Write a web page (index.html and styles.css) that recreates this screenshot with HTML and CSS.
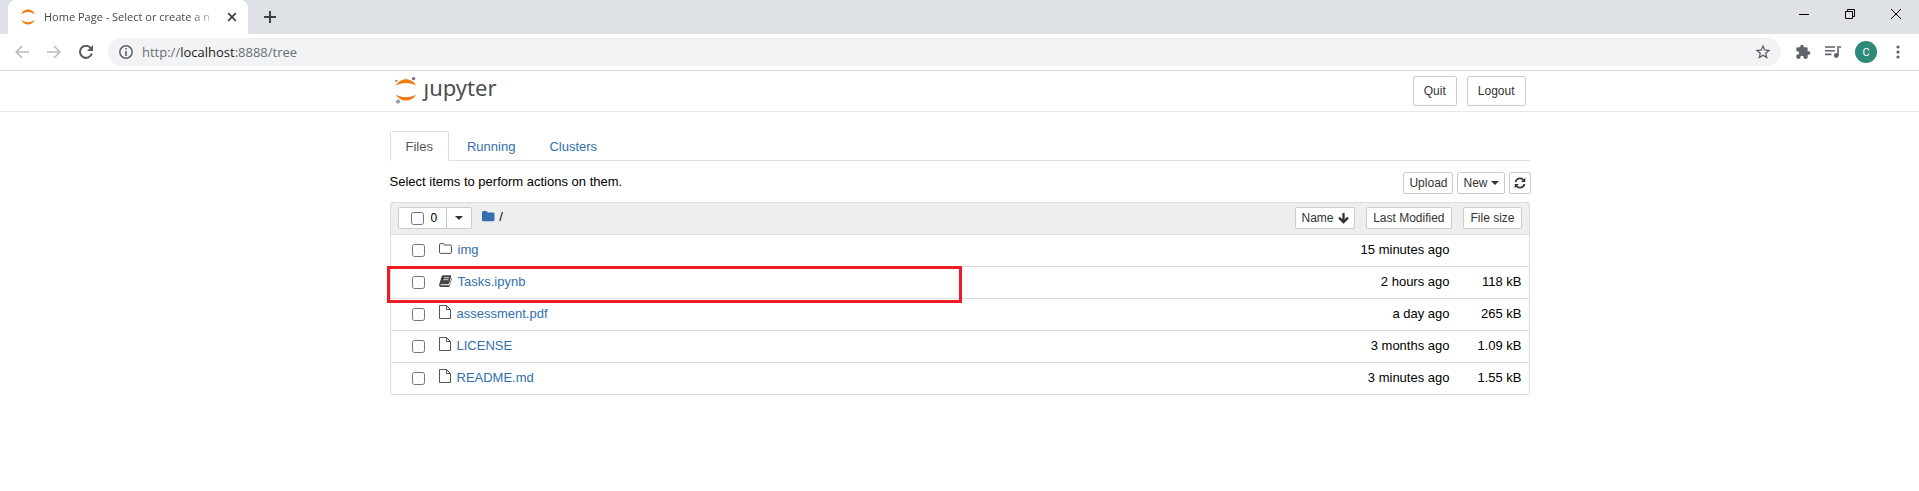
FILE: index.html
```html
<!DOCTYPE html>
<html lang="en">
<head>
<meta charset="utf-8">
<meta name="viewport" content="width=device-width, initial-scale=1">
<title>Home Page - Select or create a notebook</title>
<link rel="stylesheet" href="styles.css">
</head>
<body>
<svg class="sprite" aria-hidden="true">
  <symbol id="file" viewBox="0 0 12 14"><path d="M.5.5h7l4 4v9H.5zM7.500.500v4h4" fill="none" stroke="currentColor"/></symbol>
  <symbol id="moons" viewBox="0 0 16 16"><path d="M1 5.500C4-1.200 12-1.200 15 5.500 11 2 5 2 1 5.500zM1 10.500C4 17.200 12 17.200 15 10.500 11 14 5 14 1 10.500z" fill="#ee7c12"/></symbol>
</svg>

<div class="browser">
  <div class="tabstrip">
    <div class="tab">
      <svg class="favicon" viewBox="0 0 16 16"><use href="#moons"/></svg>
      <span class="tab-title">Home Page - Select or create a n</span>
      <button class="plain" aria-label="Close tab"><svg width="10" height="10" viewBox="0 0 10 10"><path d="M1.200 1.200l7.600 7.600M8.800 1.200L1.200 8.800" stroke="#3c4043" stroke-width="1.700"/></svg></button>
    </div>
    <button class="plain new-tab" aria-label="New tab"><svg width="12" height="12" viewBox="0 0 12 12"><path d="M6 0v12M0 6h12" stroke="#3c4043" stroke-width="2"/></svg></button>
    <div class="window-controls">
      <button class="plain" aria-label="Minimize"><svg width="10" height="10" viewBox="0 0 10 10"><path d="M0 5.500h10" stroke="#000"/></svg></button>
      <button class="plain" aria-label="Restore"><svg width="10" height="10" viewBox="0 0 10 10"><path d="M.5 2.500h7v7h-7zM2.500 2.500v-2h7v7h-2" fill="none" stroke="#000"/></svg></button>
      <button class="plain" aria-label="Close"><svg width="10" height="10" viewBox="0 0 10 10"><path d="M0 0l10 10M10 0L0 10" stroke="#000"/></svg></button>
    </div>
  </div>
  <div class="toolbar">
    <div class="nav">
      <button class="plain" aria-label="Back"><svg width="14" height="14" viewBox="0 0 14 14"><path d="M14 7H1.500M7 1L1.200 7 7 13" fill="none" stroke="#babcbe" stroke-width="1.700"/></svg></button>
      <button class="plain" aria-label="Forward"><svg width="14" height="14" viewBox="0 0 14 14"><path d="M0 7h12.500M7 1l5.800 6L7 13" fill="none" stroke="#babcbe" stroke-width="1.700"/></svg></button>
      <button class="plain" aria-label="Reload"><svg width="14" height="14" viewBox="0 0 14 14"><path d="M11.800 3.200A6 6 0 1 0 12.800 8.500" fill="none" stroke="#55585c" stroke-width="2"/><path d="M14 0v6H8z" fill="#55585c"/></svg></button>
    </div>
    <div class="omnibox">
      <svg width="14" height="14" viewBox="0 0 14 14"><circle cx="7" cy="7" r="6.200" fill="none" stroke="#5f6368" stroke-width="1.500"/><path d="M7 3v1.600M7 6v5" stroke="#5f6368" stroke-width="1.600"/></svg>
      <span class="url">http://<b>localhost</b>:8888/tree</span>
      <button class="plain" aria-label="Bookmark"><svg width="18" height="18" viewBox="0 0 24 24"><path d="M22 9.240l-7.190-.62L12 2 9.190 8.630 2 9.240l5.460 4.730L5.820 21 12 17.270 18.180 21l-1.630-7.030zM12 15.400l-3.760 2.270 1-4.280-3.320-2.880 4.380-.38L12 6.100l1.710 4.040 4.380.38-3.320 2.880 1 4.280z" fill="#55585c"/></svg></button>
    </div>
    <div class="actions">
      <button class="plain" aria-label="Extensions"><svg width="16" height="16" viewBox="0 0 24 24"><path d="M20.500 11H19V7a2 2 0 0 0-2-2h-4V3.500a2.500 2.500 0 0 0-5 0V5H4a2 2 0 0 0-2 2v3.800h1.500a2.700 2.700 0 0 1 0 5.400H2V20a2 2 0 0 0 2 2h3.800v-1.500a2.700 2.700 0 0 1 5.400 0V22H17a2 2 0 0 0 2-2v-4h1.500a2.500 2.500 0 0 0 0-5z" fill="#5f6368"/></svg></button>
      <button class="plain" aria-label="Media controls"><svg width="16" height="12" viewBox="0 0 16 12"><path d="M0 1h10M0 4.700h10M0 8.400h6.500M13 10V1h3" fill="none" stroke="#5f6368" stroke-width="1.600"/><circle cx="11.300" cy="9.500" r="2.400" fill="#5f6368"/></svg></button>
      <button class="plain avatar" aria-label="Profile C">C</button>
      <button class="plain" aria-label="Menu"><svg width="4" height="14" viewBox="0 0 4 14"><g fill="#5f6368"><circle cx="2" cy="2" r="1.600"/><circle cx="2" cy="7" r="1.600"/><circle cx="2" cy="12" r="1.600"/></g></svg></button>
    </div>
  </div>
</div>

<header class="header">
  <div class="container header-row">
    <a class="logo" href="#" aria-label="jupyter">
      <svg width="24" height="28" viewBox="0 0 24 28"><path d="M2 9.500C6 1.200 18 1.200 22 9.500 16 6 8 6 2 9.500zM2 18.500C6 26.500 18 26.500 22 18.500 16 22 8 22 2 18.500z" fill="#ee7c12"/><circle cx="2.400" cy="4.800" r="1.100" fill="#767677"/><circle cx="19.600" cy="2.600" r="1.700" fill="#767677"/><circle cx="4" cy="25.600" r="2.100" fill="#9e9e9e"/></svg>
      <span class="wordmark">ȷupyter</span>
    </a>
    <div class="session">
      <button class="btn">Quit</button>
      <button class="btn">Logout</button>
    </div>
  </div>
</header>

<main class="container">
  <nav class="tabs">
    <a class="active" href="#files">Files</a>
    <a href="#running">Running</a>
    <a href="#clusters">Clusters</a>
  </nav>
  <div class="tree-bar">
    <p>Select items to perform actions on them.</p>
    <div class="tree-buttons">
      <button class="btn small">Upload</button>
      <button class="btn small">New <i class="caret"></i></button>
      <button class="btn small refresh" aria-label="Refresh"><svg width="12" height="12" viewBox="0 0 12 12"><path d="M1.500 5A4.600 4.600 0 0 1 9.500 3M10.500 7A4.600 4.600 0 0 1 2.500 9" fill="none" stroke="#333" stroke-width="1.700"/><path d="M11.300.8v4.200H7.100zM.7 11.200V7h4.200z" fill="#333"/></svg></button>
    </div>
  </div>
  <div class="listing">
    <table>
      <thead>
        <tr>
          <th class="name">
            <div class="list-head">
              <div class="select-all">
                <label><input type="checkbox"> <span>0</span></label>
                <button aria-label="Select by type"><i class="caret"></i></button>
              </div>
              <a class="crumb" href="#" aria-label="Root folder"><svg width="13" height="11" viewBox="0 0 13 11"><path d="M0 1.500Q0 0 1.500 0h2.600q1.300 0 1.300 1.600h5.800q1.300 0 1.300 1.300v6q0 1.400-1.300 1.400H1.400Q0 10.300 0 8.900z" fill="currentColor"/></svg></a>
              <span class="slash">/</span>
              <button class="btn small sort">Name <svg width="11" height="11" viewBox="0 0 11 11"><path d="M5.500 0v9M1 4.600l4.500 4.500L10 4.600" fill="none" stroke="#333" stroke-width="2.300"/></svg></button>
            </div>
          </th>
          <th class="modified"><button class="btn small wide">Last Modified</button></th>
          <th class="size"><button class="btn small wide">File size</button></th>
        </tr>
      </thead>
      <tbody>
        <tr>
          <td><div class="item"><input type="checkbox" aria-label="Select img"><svg width="13" height="12" viewBox="0 0 13 12"><path d="M.5 2Q.5.600 1.800.600h2.400Q5.300.600 5.300 2h6q1.200 0 1.200 1.200v6q0 1.200-1.200 1.200H1.800Q.5 10.400.5 9.200z" fill="none" stroke="#555"/></svg><a href="#img">img</a></div></td>
          <td class="modified">15 minutes ago</td><td class="size"></td>
        </tr>
        <tr class="marked">
          <td><div class="item"><input type="checkbox" aria-label="Select Tasks.ipynb"><svg width="13" height="12" viewBox="0 0 13 12"><path d="M4 .2h7.600q.9 0 .6.900L10.200 8.300q-.3.900-1.200.900H2.200q-1 0-.7.600.2.500.9.500h7.400q.6 0 .8-.6L12.300 3q.7.300.5 1l-2 6.800q-.3 1.100-1.400 1.100H2q-1.300 0-1.800-1.200Q0 10 .2 9.200L2.700 1.200Q3 .2 4 .2z" fill="#444"/><path d="M5 2.700h5M4.400 4.700h5" stroke="#fff" stroke-width=".8"/></svg><a href="#tasks">Tasks.ipynb</a></div></td>
          <td class="modified">2 hours ago</td><td class="size">118 kB</td>
        </tr>
        <tr>
          <td><div class="item"><input type="checkbox" aria-label="Select assessment.pdf"><svg class="page" width="12" height="14"><use href="#file"/></svg><a href="#assessment">assessment.pdf</a></div></td>
          <td class="modified">a day ago</td><td class="size">265 kB</td>
        </tr>
        <tr>
          <td><div class="item"><input type="checkbox" aria-label="Select LICENSE"><svg class="page" width="12" height="14"><use href="#file"/></svg><a href="#license">LICENSE</a></div></td>
          <td class="modified">3 months ago</td><td class="size">1.09 kB</td>
        </tr>
        <tr>
          <td><div class="item"><input type="checkbox" aria-label="Select README.md"><svg class="page" width="12" height="14"><use href="#file"/></svg><a href="#readme">README.md</a></div></td>
          <td class="modified">3 minutes ago</td><td class="size">1.55 kB</td>
        </tr>
      </tbody>
    </table>
  </div>
</main>
</body>
</html>
```
FILE: styles.css
```css
*, *::after { box-sizing: border-box; }
body {
  margin: 0;
  background: #fff;
  color: #000;
  font: 13px/20px "Liberation Sans", Arial, sans-serif;
}
a { color: #336fae; text-decoration: none; }
button { font: inherit; color: inherit; }
svg { flex: none; display: block; }
.sprite { position: absolute; width: 0; height: 0; }
.plain {
  border: 0; padding: 0; background: none;
  display: flex; align-items: center; justify-content: center;
}

/* Browser window */
.browser { border-bottom: 1px solid #d5d7da; font-family: "Open Sans", sans-serif; }
.tabstrip {
  display: flex; align-items: center;
  height: 34px; padding-left: 8px;
  background: #dee1e6;
}
.tab {
  display: flex; align-items: center;
  width: 240px; height: 34px; padding: 0 11px 0 12px;
  border-radius: 8px 8px 0 0; background: #fff;
}
.favicon { width: 16px; height: 16px; margin-right: 8px; }
.tab-title {
  flex: 1; overflow: hidden; white-space: nowrap;
  font-size: 11px; color: #45494d;
  -webkit-mask-image: linear-gradient(90deg, #000 80%, transparent 96%);
  mask-image: linear-gradient(90deg, #000 80%, transparent 96%);
}
.new-tab { margin-left: 16px; }
.window-controls { display: flex; margin-left: auto; padding-bottom: 6px; }
.window-controls .plain { width: 46px; height: 28px; }
.toolbar { display: flex; align-items: center; height: 36px; }
.nav { display: flex; gap: 18px; padding: 0 15px; }
.omnibox {
  flex: 1; display: flex; align-items: center;
  height: 28px; padding: 0 9px 0 11px;
  border-radius: 14px; background: #f1f3f4;
}
.url { flex: 1; margin-left: 9px; font-size: 13px; color: #6b6f74; }
.url b { font-weight: 400; color: #202124; }
.actions { display: flex; align-items: center; gap: 14px; padding: 0 19px 0 14px; }
.avatar {
  width: 22px; height: 22px; border-radius: 50%;
  background: #2b8a78; color: #fff; font: 11px Roboto, sans-serif;
}
.actions .plain:last-child { margin-left: 5px; }

/* Page header */
.container { width: 1140px; max-width: 100%; margin: 0 auto; }
.header { border-bottom: 1px solid #e7e7e7; }
.header-row { display: flex; justify-content: space-between; padding: 5px 4px; }
.logo { display: flex; align-items: flex-start; gap: 6px; }
.wordmark { color: #4e4e4e; font: 22px/23px "Noto Sans", sans-serif; }
.session { display: flex; gap: 10px; }
.btn {
  display: flex; align-items: center; justify-content: center;
  border: 1px solid #ccc; border-radius: 2px;
  height: 30px; padding: 0 10px;
  background: #fff; color: #333; font-size: 12px; line-height: 18px;
}
.btn.small { height: 22px; padding: 0 5px; }
.btn.wide { padding: 0 6px; }
.caret {
  width: 0; height: 0;
  border: 4px solid transparent; border-top-color: #333; border-bottom: 0;
}
.btn .caret { margin-left: 3px; }

/* Tabs */
.tabs { display: flex; margin-top: 19px; border-bottom: 1px solid #ddd; gap: 2px; }
.tabs a {
  height: 30px; margin-bottom: -1px; padding: 5px 15px;
  border: 1px solid transparent;
}
.tabs .active {
  border-color: #ddd #ddd #fff; border-radius: 2px 2px 0 0;
  background: #fff; color: #555;
}
.tree-bar { display: flex; justify-content: space-between; padding: 11px 0 8px; }
.tree-bar p { margin: 0; }
.tree-buttons { display: flex; gap: 4px; margin-right: -1px; }
.refresh { width: 22px; }

/* File list */
.listing { border: 1px solid #ddd; border-radius: 2px; }
table { width: 100%; border-collapse: collapse; }
th { height: 31px; padding: 0; background: #eee; font-weight: 400; }
td { height: 32px; padding: 0; border-top: 1px solid #ddd; }
.modified { width: 96px; text-align: right; white-space: nowrap; }
.size { width: 77px; padding-right: 7px; text-align: right; white-space: nowrap; }
td.modified { padding-right: 2px; }
th .btn { margin-left: auto; }
.list-head { display: flex; align-items: center; padding-left: 7px; }
.select-all {
  display: flex; height: 22px;
  border: 1px solid #ccc; border-radius: 2px; background: #fff;
}
.select-all label { display: flex; align-items: center; gap: 7px; padding: 0 9px 0 12px; font-size: 12px; }
.select-all button {
  display: flex; align-items: center; justify-content: center;
  width: 25px; padding: 0; border: 0; border-left: 1px solid #ccc; background: none;
}
input[type="checkbox"] { width: 13px; height: 13px; margin: 0; }
.crumb { margin-left: 10px; padding-bottom: 3px; }
.slash { margin-left: 4px; padding-bottom: 3px; }
.list-head .sort { margin-right: 1px; gap: 4px; }
.item { display: flex; align-items: center; padding-left: 21px; }
.item svg { margin: 0 6px 2px 14px; color: #555; }
.item .page { margin-bottom: 4px; }
.marked { position: relative; }
.marked::after {
  content: ""; position: absolute; left: -4px; top: 0;
  width: calc(50% + 6px); height: 37px;
  border: 3px solid #ed1c24; pointer-events: none;
}
```
